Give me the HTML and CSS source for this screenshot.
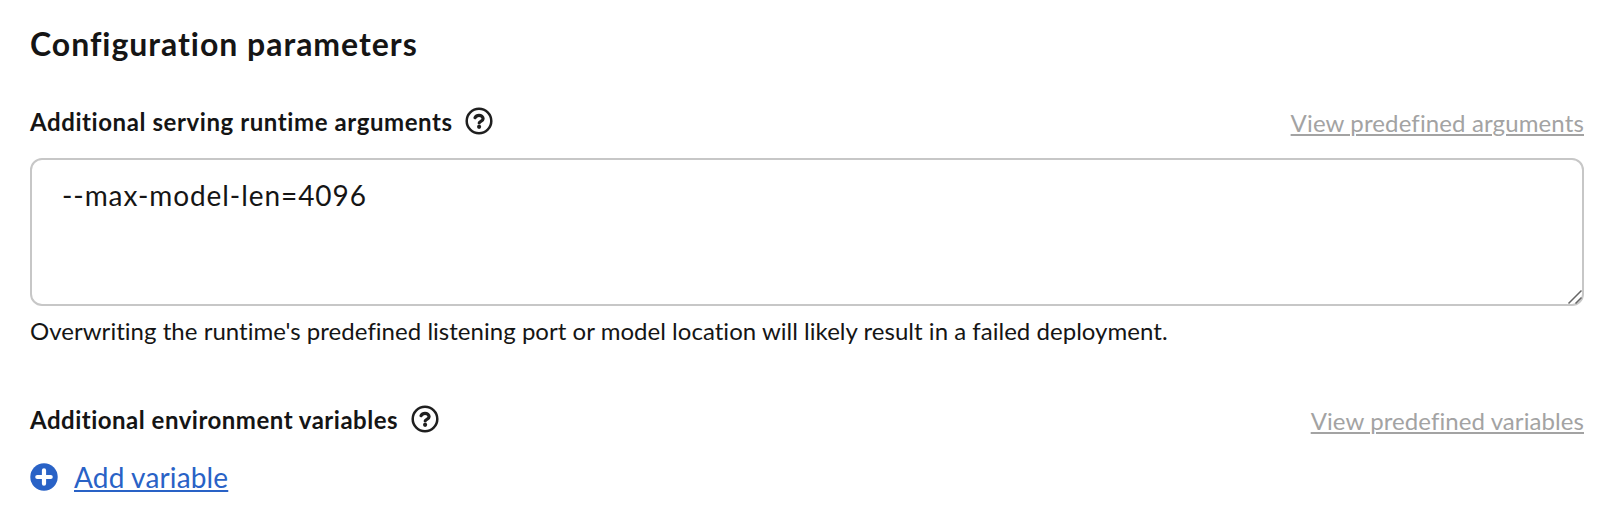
FILE: index.html
```html
<!DOCTYPE html>
<html lang="en">
<head>
<meta charset="utf-8">
<title>Configuration parameters</title>
<link rel="stylesheet" href="styles.css">
</head>
<body>
<main class="panel">
  <h2 class="title"><span>Configuration parameters</span></h2>
  <section class="group">
    <div class="row">
      <label class="label label-args" for="args">Additional serving runtime arguments</label>
      <svg class="help" viewBox="0 0 28 28"><circle cx="14" cy="14" r="12.3"/><path d="M10 10.700C10.800 9.200 12.200 8.300 14 8.300c2.200 0 4.100 1.400 4.100 3.400 0 2.500-3.900 2.600-3.900 4.300"/><circle class="dot" cx="14.1" cy="19.800" r="2.100"/></svg>
      <a class="view view-args">View predefined arguments</a>
    </div>
    <div class="field">
      <textarea class="input" id="args" spellcheck="false">--max-model-len=4096</textarea>
      <svg class="grip" viewBox="0 0 16 16"><path d="M1.500 14.500l13-13M8.500 14.500l6-6"/></svg>
    </div>
    <p class="helper"><span>Overwriting the runtime's predefined listening port or model location will likely result in a failed deployment.</span></p>
  </section>
  <section class="group-env">
    <div class="row">
      <span class="label label-env">Additional environment variables</span>
      <svg class="help" viewBox="0 0 28 28"><circle cx="14" cy="14" r="12.3"/><path d="M10 10.700C10.800 9.200 12.200 8.300 14 8.300c2.200 0 4.100 1.400 4.100 3.400 0 2.500-3.900 2.600-3.900 4.300"/><circle class="dot" cx="14.1" cy="19.800" r="2.100"/></svg>
      <a class="view view-vars">View predefined variables</a>
    </div>
    <div class="add">
      <svg class="plus" viewBox="0 0 28 28"><circle cx="14" cy="14" r="13.700"/><path d="M14 7.300v13.400M7.300 14h13.400"/></svg>
      <a class="add-link">Add variable</a>
    </div>
  </section>
</main>
</body>
</html>
```
FILE: styles.css
```css
* { box-sizing: border-box; }
body { margin: 0; background: #fff; color: #151515; font-family: Lato, "Liberation Sans", sans-serif; font-variant-ligatures: none; }
.panel { padding: 24px 40px 0 30px; }
.title { margin: 0 0 43px; font-size: 32px; line-height: 40px; font-weight: 700; letter-spacing: 0.97px; white-space: nowrap; }
.row { display: flex; align-items: flex-start; height: 30px; white-space: nowrap; }
.label { font-size: 24px; line-height: 30px; font-weight: 700; }
.label-args { width: 435px; letter-spacing: 0.58px; }
.label-env { width: 381px; letter-spacing: 0.5px; }
.help { flex: none; width: 28px; height: 28px; fill: none; stroke: #1f1f1f; stroke-width: 2.500; }
.help path { stroke-width: 3.200; stroke-linecap: round; }
.help .dot { fill: #1f1f1f; stroke: none; }
.view { margin-left: auto; padding-top: 1px; font-size: 24px; line-height: 30px; letter-spacing: 0.13px; color: #a3a3a3; text-decoration: underline; text-decoration-thickness: 2px; text-underline-offset: 2px; }
.view-vars { letter-spacing: 0.08px; }
.field { position: relative; margin-top: 21px; height: 148px; }
.input { display: block; width: 100%; height: 148px; margin: 0; padding: 13px 30px; border: 2px solid #c7c7c7; border-radius: 12px; background: #fff; color: #151515; font: 28px/44px Lato, "Liberation Sans", sans-serif; letter-spacing: 0.93px; resize: none; outline: 0; overflow: hidden; }
.grip { position: absolute; right: 1px; bottom: 1px; width: 16px; height: 16px; fill: none; stroke: #666; stroke-width: 1.500; }
.helper { margin: 7px 0 56px; font-size: 24px; line-height: 36px; letter-spacing: 0.03px; white-space: nowrap; }
.add { display: flex; align-items: flex-start; margin-top: 23px; }
.plus { width: 28px; height: 28px; margin: 5px 16px 0 0; fill: #2962c6; }
.plus path { stroke: #fff; stroke-width: 4.200; stroke-linecap: round; }
.add-link { font-size: 28px; line-height: 38px; letter-spacing: 0.15px; color: #2962c6; text-decoration: underline; text-decoration-thickness: 2px; text-underline-offset: 2px; }
```
